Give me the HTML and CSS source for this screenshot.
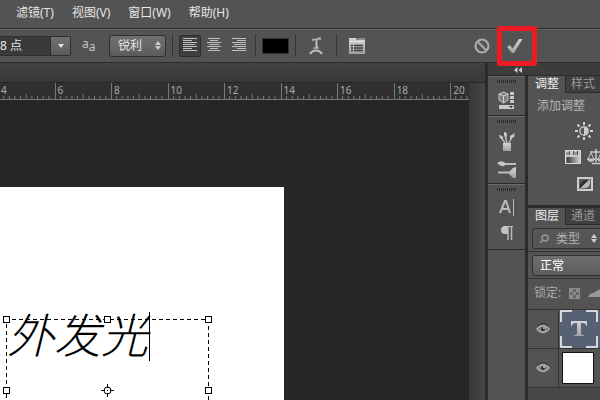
FILE: index.html
```html
<!DOCTYPE html>
<html lang="zh-CN">
<head>
<meta charset="utf-8">
<title>外发光</title>
<link rel="stylesheet" href="styles.css">
</head>
<body>
<svg class="defs" aria-hidden="true">
  <defs>
    <linearGradient id="metal" x1="0" y1="0" x2="0" y2="1"><stop offset="0" stop-color="#d4d4d4"/><stop offset="1" stop-color="#a0a0a0"/></linearGradient>
    <linearGradient id="ramp"><stop offset="0" stop-color="#333"/><stop offset="1" stop-color="#ccc"/></linearGradient>
    <symbol id="ticks" overflow="visible">
      <path d="M.5 0V17" stroke="#777"/>
      <g stroke="#777" stroke-width="1">
        <line x1="10%" x2="10%" y1="13" y2="17"/><line x1="20%" x2="20%" y1="13" y2="17"/>
        <line x1="30%" x2="30%" y1="13" y2="17"/><line x1="40%" x2="40%" y1="13" y2="17"/>
        <line x1="50%" x2="50%" y1="11" y2="17"/><line x1="60%" x2="60%" y1="13" y2="17"/>
        <line x1="70%" x2="70%" y1="13" y2="17"/><line x1="80%" x2="80%" y1="13" y2="17"/>
        <line x1="90%" x2="90%" y1="13" y2="17"/>
      </g>
    </symbol>
    <symbol id="updown" viewBox="0 0 6 9"><path d="M0 4L3 0l3 4zM0 5h6L3 9z" fill="#ccc"/></symbol>
    <symbol id="eye" viewBox="0 0 14 12">
      <path d="M1 6Q7-1 13 6Q7 13 1 6z" fill="#666" stroke="#aaa" stroke-width="1.600"/>
      <path d="M1.500 3.200Q7-2 12.500 3.200" fill="none" stroke="#333"/>
      <circle cx="7" cy="6" r="3" fill="#aaa"/><circle cx="7" cy="6" r="2.200" fill="#333"/><circle cx="8" cy="5" r=".9" fill="#ddd"/>
    </symbol>
  </defs>
</svg>

<nav class="menubar">
  <a href="#filter">滤镜(T)</a><a href="#view">视图(V)</a><a href="#window">窗口(W)</a><a href="#help">帮助(H)</a>
</nav>

<header class="options">
  <div class="size">
    <input type="text" value="8 点" aria-label="字体大小">
    <button type="button" aria-label="选择字体大小"><svg width="6" height="4"><path d="M0 0h6L3 4z" fill="#e4e4e4"/></svg></button>
  </div>
  <span class="aa" aria-hidden="true">a<span>a</span></span>
  <div class="select aliasing">
    <select aria-label="消除锯齿"><option>锐利</option></select>
    <svg width="6" height="9"><use href="#updown"/></svg>
  </div>
  <i class="sep"></i>
  <div class="align">
    <button type="button" class="on" aria-label="左对齐"><svg width="15" height="15" stroke="#c0c0c0"><path d="M0 .5h14M0 2.500h9M0 4.500h14M0 6.500h12M0 8.500h14M0 10.500h9M0 12.500h14"/></svg></button>
    <button type="button" aria-label="居中"><svg width="15" height="15" stroke="#c0c0c0"><path d="M1 .5h12M3 2.500h8M0 4.500h14M2 6.500h10M0 8.500h14M3 10.500h8M1 12.500h12"/></svg></button>
    <button type="button" aria-label="右对齐"><svg width="15" height="15" stroke="#c0c0c0"><path d="M1 .5h14M6 2.500h9M1 4.500h14M3 6.500h12M1 8.500h14M6 10.500h9M1 12.500h14"/></svg></button>
  </div>
  <i class="sep"></i>
  <button type="button" class="swatch" aria-label="文本颜色"></button>
  <i class="sep"></i>
  <button type="button" class="icon" aria-label="变形文字"><svg width="14" height="18" fill="none" stroke="#bcbcbc"><path d="M4 4V2.500Q7 3 11 .8V3" stroke-width="1.400"/><path d="M7.500 2.500V11" stroke-width="2"/><path d="M4.500 11q3 .5 5-.5" stroke-width="1.400"/><path d="M1 17Q3 13.500 7 13.500T13 17" stroke-width="2.200"/></svg></button>
  <i class="sep"></i>
  <button type="button" class="icon" aria-label="字符面板"><svg width="17" height="17"><path d="M0 1h7l1 2h8v14H0z" fill="url(#metal)"/><path d="M8 1h8v2H9z" fill="#8c8c8c"/><path d="M0 4.500h16" stroke="#fff" opacity=".5"/><path d="M2 8.500h2M5 8.500h9M2 11h2M5 11h9M2 13.500h2M5 13.500h9" stroke="#3a3a3a" stroke-width="1.300"/></svg></button>
  <div class="commit">
    <button type="button" aria-label="取消"><svg width="16" height="16" fill="none" stroke="#aaa" stroke-width="2.200"><circle cx="8" cy="8" r="6.500"/><path d="M3.500 3.500l9 9"/></svg></button>
    <button type="button" class="marked" aria-label="提交"><svg width="16" height="16"><path d="M0 9l3-2 2.500 3.500L12 1h3.500L7 15H5z" fill="url(#metal)"/></svg></button>
  </div>
</header>

<main class="work">
  <section class="document">
    <div class="doctabs"></div>
    <div class="view">
      <div class="area">
        <div class="ruler">
          <span><svg><use href="#ticks" width="100%"/></svg>4</span>
          <span><svg><use href="#ticks" width="100%"/></svg>6</span>
          <span><svg><use href="#ticks" width="100%"/></svg>8</span>
          <span><svg><use href="#ticks" width="100%"/></svg>10</span>
          <span><svg><use href="#ticks" width="100%"/></svg>12</span>
          <span><svg><use href="#ticks" width="100%"/></svg>14</span>
          <span><svg><use href="#ticks" width="100%"/></svg>16</span>
          <span><svg><use href="#ticks" width="100%"/></svg>18</span>
          <span><svg class="last"><use href="#ticks" width="100%"/></svg>20</span>
        </div>
        <div class="canvas">
          <div class="paper">
            <svg class="frame" width="210" height="90" fill="none" stroke="#000" shape-rendering="crispEdges">
              <path d="M3.500 90V4.500H205.500V90" stroke-dasharray="4 3"/>
              <g fill="#fff"><path d="M.5 1.500h6v6h-6zM101.500 1.500h6v6h-6zM202.500 1.500h6v6h-6zM.5 72.500h6v6h-6zM202.500 72.500h6v6h-6z"/></g>
              <g shape-rendering="auto"><circle cx="104.500" cy="75.500" r="3.500"/><path d="M98 75.500h4M107 75.500h4M104.500 69v4M104.500 78v4M104 75.500h1"/></g>
            </svg>
            <span class="art">外发光</span>
          </div>
        </div>
      </div>
      <div class="scroll"></div>
    </div>
  </section>

  <aside class="side">
    <div class="collapse"><svg width="8" height="6"><path d="M3.500 0v6L0 3zM8 0v6L4.500 3z" fill="#ccc"/></svg></div>
    <div class="docks">
      <div class="dock">
        <div class="group">
          <i class="grip"></i>
          <button type="button" aria-label="属性"><svg width="18" height="19"><path d="M1 3l4.500-2L10 3v6l-4.500 3L1 9z" fill="#808080" stroke="#c4c4c4"/><path d="M1 3l4.500 2L10 3M5.500 5v7" fill="none" stroke="#d0d0d0"/><path d="M12 1h4v3h-4zM12 5h4v3h-4zM12 9h4v3h-4zM1 14h15v4H1z" fill="#c8c8c8"/><path d="M11 15h4l-2 2z" fill="#222"/></svg></button>
        </div>
        <div class="group">
          <i class="grip"></i>
          <button type="button" aria-label="画笔预设"><svg width="18" height="21"><path d="M5 12h8v8H5z" fill="url(#metal)"/><path d="M7 12L3 6M9 12L7 4M11 12l3-6" stroke="#b4b4b4" stroke-width="1.600"/><path d="M1 4q3 0 4 2l0 3-3-2zM6 1q3 0 3 3L8 7 6 4zM12 5l5-3-1 4-4 2z" fill="#c8c8c8"/></svg></button>
          <button type="button" aria-label="画笔"><svg width="20" height="18"><path d="M0 3q4-3 7-1l2 2-2 2Q3 7 0 3z" fill="#c4c4c4"/><path d="M8 4h11M1 12.500h12" stroke="#bcbcbc" stroke-width="1.800"/><path d="M12 12l4-4 3-1v11h-3l-4-4z" fill="url(#metal)"/></svg></button>
        </div>
        <div class="group">
          <i class="grip"></i>
          <button type="button" aria-label="字符"><svg width="16" height="18"><path d="M1 14L6 2h1l4 12M3 10h7" fill="none" stroke="#bcbcbc" stroke-width="2"/><path d="M14.500 0v17" stroke="#bbb"/></svg></button>
          <button type="button" aria-label="段落"><svg width="14" height="16"><path d="M4 1h9v1H8v7H5Q1 9 1 5 1 2 4 1z" fill="#c4c4c4"/><path d="M8 1v14M11.500 1v14" stroke="#b8b8b8" stroke-width="1.500"/></svg></button>
        </div>
      </div>

      <div class="panels">
        <section class="panel">
          <div class="tabs"><button type="button" class="on">调整</button><button type="button">样式</button></div>
          <div class="adjust">
            <p>添加调整</p>
            <div class="adjrow one"><button type="button" aria-label="亮度/对比度"><svg width="18" height="18"><g stroke="#d0d0d0" stroke-width="2"><path d="M9 0v3M9 15v3M0 9h3M15 9h3M2.500 2.500l2 2M13.500 13.500l2 2M2.500 15.500l2-2M13.500 4.500l2-2"/></g><circle cx="9" cy="9" r="4.200" fill="#555" stroke="#c4c4c4" stroke-width="1.400"/><path d="M9 5a4 4 0 010 8z" fill="#ccc"/></svg></button></div>
            <div class="adjrow two">
              <button type="button" aria-label="色相"><svg width="16" height="14"><path d="M.5.5h15v13H.5z" fill="#c8c8c8" stroke="#d8d8d8"/><path d="M4 1h1v4H4zM8 1h1v4H8zM12 1h1v4h-1z" fill="#555"/><path d="M1 2h3v3H1zM9 2h3v3H9z" fill="#999"/><path d="M1.500 7h13v6h-13z" fill="url(#ramp)"/></svg></button>
              <button type="button" aria-label="色彩平衡"><svg width="18" height="16" fill="none" stroke="#ccc"><path d="M3 3h12M9 0v13M5 14.500h8" stroke-width="1.500"/><path d="M4 4L1 10M4 4l3 6M14 4l-3 6M14 4l3 6"/><path d="M0 10h8q-4 5-8 0M10 10h8q-4 5-8 0" fill="#bbb"/></svg></button>
            </div>
            <div class="adjrow three"><button type="button" aria-label="反相"><svg width="16" height="14"><path d="M1 1h14v12H1z" fill="#5c5c5c" stroke="#ccc" stroke-width="2"/><path d="M3 11Q2 4 8 3l4 0L4 11z" fill="#333"/><path d="M13 3L4 11q4 1 7-1 3-3 2-7z" fill="#b8b8b8"/><path d="M2 13L14 1" stroke="#aaa"/></svg></button></div>
          </div>
        </section>

        <section class="panel layers">
          <div class="tabs"><button type="button" class="on">图层</button><button type="button">通道</button></div>
          <div class="row">
            <div class="select filter">
              <svg width="10" height="10" fill="none" stroke="#999" stroke-width="1.500"><circle cx="6" cy="4" r="3"/><path d="M4 6L1 9"/></svg>
              <select aria-label="图层类型"><option>类型</option></select>
              <svg width="6" height="9"><use href="#updown"/></svg>
            </div>
          </div>
          <div class="row"><div class="select blend"><select aria-label="混合模式"><option>正常</option></select></div></div>
          <div class="lock"><span>锁定:</span>
            <svg width="11" height="11"><path d="M0 0h11v11H0z" fill="#8c8c8c"/><path d="M4 1h3v3H4zM1 4h3v3H1zM7 4h3v3H7zM4 7h3v3H4z" fill="#666"/></svg>
            <svg width="12" height="12"><path d="M0 10q2-4 5-4L12 2v8z" fill="#999"/></svg>
          </div>
          <div class="layer">
            <button type="button" class="see" aria-label="显示文字图层"><svg width="14" height="12"><use href="#eye"/></svg></button>
            <div class="thumb text"><svg width="38" height="38"><path d="M1 12V1h11M26 1h11v11M1 26v11h11M37 26v11H26" fill="none" stroke="#fff" stroke-width="1.500"/><path d="M11 11h16v5h-1q0-3-4-3h-1v10q0 2 3 2v1H14v-1q3 0 3-2V13h-1q-4 0-4 3h-1z" fill="url(#metal)"/></svg></div>
          </div>
          <div class="layer">
            <button type="button" class="see" aria-label="显示背景图层"><svg width="14" height="12"><use href="#eye"/></svg></button>
            <div class="thumb"><i class="blank"></i></div>
          </div>
          <div class="rest"></div>
        </section>
      </div>
    </div>
  </aside>
</main>
</body>
</html>
```

FILE: styles.css
```css
* { box-sizing: border-box; }

body {
  margin: 0;
  min-height: 100vh;
  display: flex;
  flex-direction: column;
  overflow: hidden;
  background: #535353;
  color: #e6e6e6;
  font: 12px/16px "Noto Sans", "Noto Sans CJK SC", sans-serif;
}

button, input, select {
  margin: 0;
  padding: 0;
  border: 0;
  background: none;
  color: inherit;
  font: inherit;
}

select { appearance: none; }
svg { display: block; flex: none; }
a { color: inherit; text-decoration: none; }
p { margin: 0; }
.defs { position: absolute; width: 0; height: 0; }

.menubar {
  display: flex;
  gap: 18px;
  height: 28px;
  padding: 5px 16px 0;
}

/* Options bar */
.options {
  display: flex;
  align-items: center;
  height: 35px;
  border-top: 1px solid #2d2d2d;
  border-bottom: 1px solid #2d2d2d;
  box-shadow: inset 0 1px #666;
}

.size {
  display: flex;
  width: 71px;
  height: 20px;
  border: 1px solid #2e2e2e;
  border-left: 0;
  border-radius: 0 2px 2px 0;
  background: #3a3a3a;
}

.size input { flex: 1; min-width: 0; }

.size button {
  display: grid;
  place-items: center;
  width: 20px;
  border-left: 1px solid #2e2e2e;
  background: linear-gradient(#707070, #5c5c5c);
}

.aa {
  display: flex;
  margin-left: 11px;
  width: 27px;
  color: #c4c4c4;
  line-height: 12px;
}

.aa span { padding-top: 3px; }

.select {
  display: flex;
  align-items: center;
  border: 1px solid #303030;
  border-radius: 3px;
  background: linear-gradient(#707070, #5c5c5c);
}

.select select { flex: 1; min-width: 0; }

.aliasing {
  width: 57px;
  height: 22px;
  padding: 0 4px 0 8px;
}

.sep {
  width: 1px;
  height: 23px;
  margin: 0 6px;
  background: #363636;
}

.align { display: flex; gap: 2px; }

.align button {
  display: grid;
  place-items: center;
  width: 22px;
  height: 22px;
}

.align .on {
  border: 1px solid #2c2c2c;
  border-radius: 2px;
  background: #3f3f3f;
}

.swatch {
  width: 27px;
  height: 16px;
  border: 1px solid #333;
  background: #000;
}

.icon {
  display: grid;
  place-items: center;
  width: 28px;
}

.commit {
  display: flex;
  gap: 17px;
  margin-left: auto;
  padding-right: 77px;
}

.marked { position: relative; }

.marked::after {
  content: "";
  position: absolute;
  z-index: 2;
  inset: -12px -14px -12px -10px;
  border: 5px solid #ed1c24;
  border-radius: 2px;
}

/* Document */
.work { flex: 1; display: flex; }

.document {
  flex: 1;
  min-width: 0;
  display: flex;
  flex-direction: column;
}

.doctabs {
  height: 20px;
  border-bottom: 1px solid #262626;
  background: linear-gradient(#424242, #373737);
}

.view { flex: 1; display: flex; }

.area {
  flex: 1;
  min-width: 0;
  display: flex;
  flex-direction: column;
  overflow: hidden;
}

.ruler {
  display: grid;
  grid-template-columns: repeat(8, 3fr) 1fr;
  height: 17px;
  margin-left: -2px;
  border-bottom: 1px solid #777;
  background: #303030;
  color: #aaa;
  font-size: 10px;
  line-height: 14px;
}

.ruler span { position: relative; min-width: 0; padding-left: 3px; }

.ruler svg {
  position: absolute;
  inset: 0;
  width: 100%;
  height: 100%;
}

.ruler .last { width: 300%; }

.canvas {
  flex: 1;
  display: flex;
  padding-top: 87px;
  background: #262626;
}

.paper {
  position: relative;
  width: 284px;
  min-height: 213px;
  background: #fff;
}

.frame { position: absolute; left: 3px; top: 128px; }

.art {
  position: absolute;
  left: 7px;
  top: 120px;
  padding-right: 2px;
  color: #000;
  font: italic 300 47px/60px "Liberation Serif", "Noto Sans CJK SC", serif;
  white-space: nowrap;
}

.art::after {
  content: "";
  position: absolute;
  right: 0;
  top: 5px;
  height: 49px;
  border-left: 1px solid #000;
}

.scroll {
  width: 16px;
  background: linear-gradient(90deg, #383838, #464646);
}

/* Side panels */
.side {
  width: 115px;
  display: flex;
  flex-direction: column;
  border-left: 3px solid #2a2a2a;
}

.collapse {
  height: 13px;
  padding: 4px 0 0 26px;
  border-bottom: 1px solid #2b2b2b;
  background: #3c3c3c;
}

.docks { flex: 1; display: flex; }
.dock { width: 37px; }

.group {
  display: flex;
  flex-direction: column;
  align-items: center;
  gap: 8px;
  padding: 3px 0 5px;
  border-top: 1px solid #6a6a6a;
  border-bottom: 1px solid #2b2b2b;
}

.group:last-child { padding-bottom: 8px; }

.grip {
  width: 20px;
  height: 3px;
  background: repeating-linear-gradient(90deg, #2c2c2c 0 1px, transparent 1px 2px);
}

.panels {
  flex: 1;
  min-width: 0;
  display: flex;
  flex-direction: column;
  border-left: 3px solid #2b2b2b;
  overflow: hidden;
}

.tabs { display: flex; height: 17px; }

.tabs button {
  flex: 1;
  border-left: 1px solid #2b2b2b;
  border-bottom: 1px solid #2b2b2b;
  background: #3f3f3f;
  color: #999;
  line-height: 16px;
  white-space: nowrap;
}

.tabs .on {
  flex: 0 0 37px;
  border-color: #535353;
  background: #535353;
  color: #eee;
}

.adjust { height: 112px; padding: 4px 0 0 9px; color: #b4b4b4; }
.adjust p { height: 25px; line-height: 18px; white-space: nowrap; }
.adjrow { display: flex; align-items: center; }
.one { padding: 0 0 9px 38px; }
.two { gap: 6px; padding: 0 0 12px 28px; }
.three { padding-left: 40px; }

.layers {
  flex: 1;
  display: flex;
  flex-direction: column;
  border-top: 3px solid #2b2b2b;
}

.row {
  height: 27px;
  padding: 3px 0 2px 4px;
  border-bottom: 1px solid #333;
}

.row .select { height: 21px; margin-right: -6px; }
.filter { gap: 7px; padding: 0 8px 0 6px; background: #565656; color: #b4b4b4; }
.blend { padding-left: 7px; color: #fff; }

.lock {
  display: flex;
  align-items: center;
  gap: 8px;
  height: 30px;
  padding: 0 0 2px 6px;
  color: #a8a8a8;
  white-space: nowrap;
}

.layer {
  display: flex;
  height: 39px;
  border-top: 1px solid #333;
}

.see {
  display: grid;
  place-items: center;
  width: 31px;
  border-right: 1px solid #333;
}

.thumb {
  flex: 1;
  display: flex;
  align-items: center;
  padding-left: 3px;
}

.text { padding-left: 1px; background: #566273; }

.blank {
  width: 32px;
  height: 32px;
  border: 1px solid #111;
  background: #fff;
}

.rest {
  flex: 1;
  border-top: 1px solid #333;
  background: #484848;
}
```
